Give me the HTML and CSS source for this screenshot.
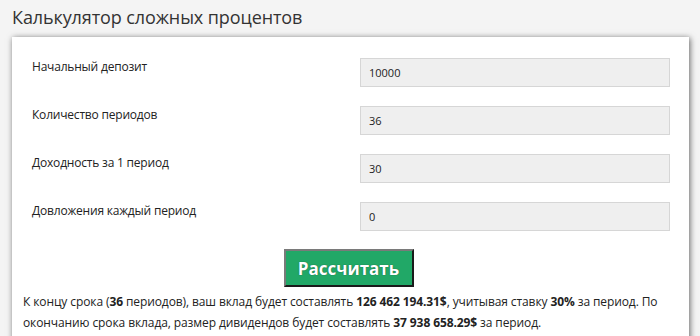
FILE: index.html
```html
<!DOCTYPE html>
<html lang="ru">
<head>
    <meta charset="UTF-8">
    <meta name="viewport" content="width=device-width, initial-scale=1.0">
    <title>Калькулятор сложных процентов</title>
    <link rel="stylesheet" href="styles.css">
</head>
<body>
    <h1>Калькулятор сложных процентов</h1>
    <div class="calc">
        <div class="row">
            <label for="deposit">Начальный депозит</label>
            <input type="text" id="deposit" value="10000">
        </div>
        <div class="row">
            <label for="periods">Количество периодов</label>
            <input type="text" id="periods" value="36">
        </div>
        <div class="row">
            <label for="rate">Доходность за 1 период</label>
            <input type="text" id="rate" value="30">
        </div>
        <div class="row">
            <label for="addition">Довложения каждый период</label>
            <input type="text" id="addition" value="0">
        </div>
        <div class="actions">
            <button>Рассчитать</button>
        </div>
        <p class="result">К концу срока (<b>36</b> периодов), ваш вклад будет составлять <b>126 462 194.31$</b>, учитывая ставку <b>30%</b> за период. По окончанию срока вклада, размер дивидендов будет составлять <b>37 938 658.29$</b> за период.</p>
    </div>
</body>
</html>
```

FILE: styles.css
```css
body {
    margin: 0;
    background-color: #f4f4f4;
    font-family: 'Open Sans', 'Noto Sans', sans-serif;
    color: #222;
}
h1 {
    margin: 0;
    padding: 5px 12px 7px;
    font-size: 18px;
    font-weight: normal;
    letter-spacing: -0.1px;
    line-height: 25px;
    color: #333;
}
.calc {
    margin: 0 11px 0 12px;
    padding: 10px 10px 20px 11px;
    background-color: #ffffff;
    box-shadow: 1px 1px 6px rgba(0, 0, 0, 0.6);
}
.row {
    display: flex;
    justify-content: space-between;
    align-items: flex-start;
    padding: 11px 9px 8px 9px;
}
.row label {
    font-size: 12px;
    letter-spacing: -0.2px;
    line-height: 18px;
}
.row input {
    box-sizing: border-box;
    width: 310px;
    height: 29px;
    padding: 0 8px;
    border: 1px solid #d6d6d6;
    background-color: #efefef;
    font-family: inherit;
    font-size: 11px;
    color: #222;
}
.actions {
    display: flex;
    justify-content: center;
    margin-top: 10px;
    padding-right: 5px;
}
button {
    width: 130px;
    height: 38px;
    border: 2px solid;
    border-color: #7a7a7a #1a1a1a #1a1a1a #7a7a7a;
    background-color: #21a867;
    color: #ffffff;
    font-family: inherit;
    font-size: 17px;
    font-weight: bold;
    text-shadow: 0 0 1px rgba(0, 0, 0, 0.6);
    cursor: pointer;
}
.result {
    margin: 4px 0 0;
    font-size: 12px;
    letter-spacing: -0.1px;
    line-height: 21px;
}
.result b {
    font-weight: bold;
}
```
